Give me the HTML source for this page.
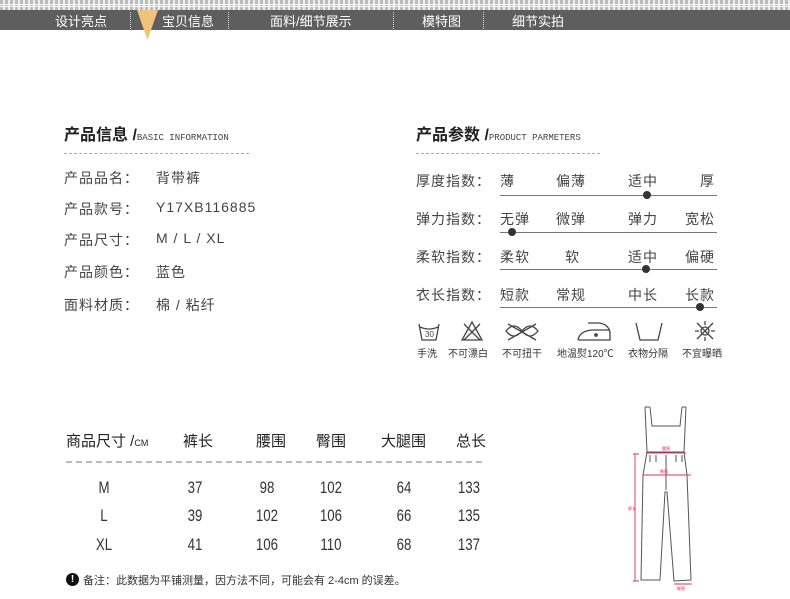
<!DOCTYPE html>
<html><head><meta charset="utf-8"><style>
*{margin:0;padding:0;box-sizing:border-box}
body{width:790px;height:599px;background:#fff;position:relative;overflow:hidden;font-family:"Liberation Sans","Noto Sans CJK SC",sans-serif;color:#333}
.a{position:absolute;white-space:nowrap}
.nav{position:absolute;left:0;top:10px;width:790px;height:20px;background:#5e5e5e}
.nav span{position:absolute;top:1px;color:#fff;font-size:13px}
.sep{position:absolute;top:2px;height:17px;border-left:1px dotted #ddd}
.t{font-size:16px;color:#222;font-weight:bold}
.t small{font-family:"Liberation Mono",monospace;font-size:9px;color:#444;font-weight:normal}
.dash{position:absolute;border-top:1px dashed #aaa;height:0}
.lbl{font-size:14px;color:#444;letter-spacing:1px}
.line{position:absolute;height:1px;background:#777}
.dot{position:absolute;width:8px;height:8px;border-radius:50%;background:#333}
.ic{font-size:10px;color:#333}
.n{font-size:17px;color:#333;width:40px;text-align:center;transform:scaleX(0.78)}
.h{font-size:15px;color:#222}
</style></head><body>
<div class="a" style="left:0;top:0;width:790px;height:10px;background:repeating-linear-gradient(90deg,#bbb 0 3px,#eee 3px 5px)"></div>
<div class="a" style="left:0;top:4px;width:790px;height:3px;border-top:1px solid #fff;border-bottom:1px solid #fff"></div>
<div class="nav">
<span style="left:55px">设计亮点</span>
<div class="sep" style="left:130px"></div>
<span style="left:162px">宝贝信息</span>
<div class="sep" style="left:228px"></div>
<span style="left:270px">面料/细节展示</span>
<div class="sep" style="left:393px"></div>
<span style="left:422px">模特图</span>
<div class="sep" style="left:483px"></div>
<span style="left:512px">细节实拍</span>
</div>
<svg class="a" style="left:137px;top:10px" width="22" height="31"><polygon points="0,0 21,0 10.5,30" fill="#f3c27a"/></svg>

<div class="a t" style="left:64px;top:121px">产品信息 /<small>BASIC INFORMATION</small></div>
<div class="dash" style="left:64px;top:153px;width:185px"></div>
<div class="a lbl" style="left:64px;top:168px">产品品名：</div><div class="a lbl" style="left:156px;top:168px">背带裤</div>
<div class="a lbl" style="left:64px;top:199px">产品款号：</div><div class="a lbl" style="left:156px;top:199px">Y17XB116885</div>
<div class="a lbl" style="left:64px;top:230px">产品尺寸：</div><div class="a lbl" style="left:156px;top:230px">M / L / XL</div>
<div class="a lbl" style="left:64px;top:262px">产品颜色：</div><div class="a lbl" style="left:156px;top:262px">蓝色</div>
<div class="a lbl" style="left:64px;top:295px">面料材质：</div><div class="a lbl" style="left:156px;top:295px">棉 / 粘纤</div>

<div class="a t" style="left:416px;top:121px">产品参数 /<small>PRODUCT PARMETERS</small></div>
<div class="dash" style="left:416px;top:153px;width:184px"></div>

<div class="a lbl" style="left:416px;top:171px">厚度指数：</div>
<div class="a lbl" style="left:500px;top:171px">薄</div><div class="a lbl" style="left:556px;top:171px">偏薄</div><div class="a lbl" style="left:628px;top:171px">适中</div><div class="a lbl" style="left:700px;top:171px">厚</div>
<div class="line" style="left:500px;top:195px;width:217px"></div><div class="dot" style="left:643px;top:191px"></div>

<div class="a lbl" style="left:416px;top:209px">弹力指数：</div>
<div class="a lbl" style="left:500px;top:209px">无弹</div><div class="a lbl" style="left:556px;top:209px">微弹</div><div class="a lbl" style="left:628px;top:209px">弹力</div><div class="a lbl" style="left:685px;top:209px">宽松</div>
<div class="line" style="left:500px;top:232px;width:217px"></div><div class="dot" style="left:508px;top:228px"></div>

<div class="a lbl" style="left:416px;top:247px">柔软指数：</div>
<div class="a lbl" style="left:500px;top:247px">柔软</div><div class="a lbl" style="left:565px;top:247px">软</div><div class="a lbl" style="left:628px;top:247px">适中</div><div class="a lbl" style="left:685px;top:247px">偏硬</div>
<div class="line" style="left:500px;top:269px;width:217px"></div><div class="dot" style="left:642px;top:265px"></div>

<div class="a lbl" style="left:416px;top:285px">衣长指数：</div>
<div class="a lbl" style="left:500px;top:285px">短款</div><div class="a lbl" style="left:556px;top:285px">常规</div><div class="a lbl" style="left:628px;top:285px">中长</div><div class="a lbl" style="left:685px;top:285px">长款</div>
<div class="line" style="left:500px;top:307px;width:217px"></div><div class="dot" style="left:696px;top:303px"></div>

<svg class="a" style="left:414px;top:318px" width="320" height="26" fill="none" stroke="#444" stroke-width="1.3">
<path d="M5 6 L8 22 H22 L25 6 M6 9 Q15 13 24 9"/><text x="11" y="19" font-size="8" fill="#444" stroke="none">30</text>
<path d="M48 22 L58 4 L68 22 Z M50 6 L66 22 M66 6 L50 22"/>
<path d="M92 13 Q100 3 108 13 Q116 23 124 13 Q116 3 108 13 Q100 23 92 13 Z M94 6 L122 22 M122 6 L94 22"/>
<path d="M164 22 H196 V14 Q194 6 185 5 H174 M164 22 Q166 12 180 12 H196"/><circle cx="182" cy="17" r="1.2" fill="#444"/>
<path d="M222 5 L226 22 H244 L248 5"/>
<circle cx="291" cy="13" r="4"/><path d="M283 5 L299 21 M299 5 L283 21 M291 3 V7 M291 19 V23 M281 13 H285 M297 13 H301"/>
</svg>
<div class="a ic" style="left:417px;top:345px">手洗</div>
<div class="a ic" style="left:448px;top:345px">不可漂白</div>
<div class="a ic" style="left:502px;top:345px">不可扭干</div>
<div class="a ic" style="left:557px;top:345px">地温熨120℃</div>
<div class="a ic" style="left:628px;top:345px">衣物分隔</div>
<div class="a ic" style="left:682px;top:345px">不宜曝晒</div>

<div class="a h" style="left:66px;top:430px">商品尺寸 /<span style="font-size:9px">CM</span></div>
<div class="a h" style="left:183px;top:430px">裤长</div>
<div class="a h" style="left:256px;top:430px">腰围</div>
<div class="a h" style="left:316px;top:430px">臀围</div>
<div class="a h" style="left:381px;top:430px">大腿围</div>
<div class="a h" style="left:456px;top:430px">总长</div>
<div class="dash" style="left:66px;top:461px;width:416px;border-top:2px dashed #bbb"></div>

<div class="a n" style="left:84px;top:478px">M</div><div class="a n" style="left:175px;top:478px">37</div><div class="a n" style="left:247px;top:478px">98</div><div class="a n" style="left:311px;top:478px">102</div><div class="a n" style="left:384px;top:478px">64</div><div class="a n" style="left:449px;top:478px">133</div>
<div class="a n" style="left:84px;top:506px">L</div><div class="a n" style="left:175px;top:506px">39</div><div class="a n" style="left:247px;top:506px">102</div><div class="a n" style="left:311px;top:506px">106</div><div class="a n" style="left:384px;top:506px">66</div><div class="a n" style="left:449px;top:506px">135</div>
<div class="a n" style="left:84px;top:535px">XL</div><div class="a n" style="left:175px;top:535px">41</div><div class="a n" style="left:247px;top:535px">106</div><div class="a n" style="left:311px;top:535px">110</div><div class="a n" style="left:384px;top:535px">68</div><div class="a n" style="left:449px;top:535px">137</div>

<div class="a" style="left:66px;top:573px;width:13px;height:13px;border-radius:50%;background:#111;color:#fff;font-size:10px;font-weight:bold;text-align:center;line-height:13px">!</div>
<div class="a" style="left:83px;top:572px;font-size:11px;color:#333">备注：此数据为平铺测量，因方法不同，可能会有 2-4cm 的误差。</div>

<svg class="a" style="left:600px;top:400px" width="120" height="199" fill="none" stroke="#555" stroke-width="1">
<path d="M45 7 L47 52 M50 7 L52 26 H80 L82 7 M86 7 L84 52 M45 7 H50 M82 7 H86"/>
<path d="M47 52 H84 L87 75 L91 180 L74 181 L67 92 L65 92 L60 180 L41 180 L43 75 Z"/>
<path d="M66 55 V90 M50 55 V62 M56 55 V62 M76 55 V62 M82 55 V62"/>
<g stroke="#e0305a" stroke-width="0.9">
<path d="M46 53 H86 M43 75 H91 M35 54 V181 M33 54 H39 M33 181 H39 M74 184 H92"/>
</g>
<g fill="#e0305a" font-size="4" stroke="none"><text x="62" y="50">腰围</text><text x="60" y="73">臀围</text><text x="28" y="110">裤长</text><text x="77" y="190">脚围</text></g>
</svg>
</body></html>
